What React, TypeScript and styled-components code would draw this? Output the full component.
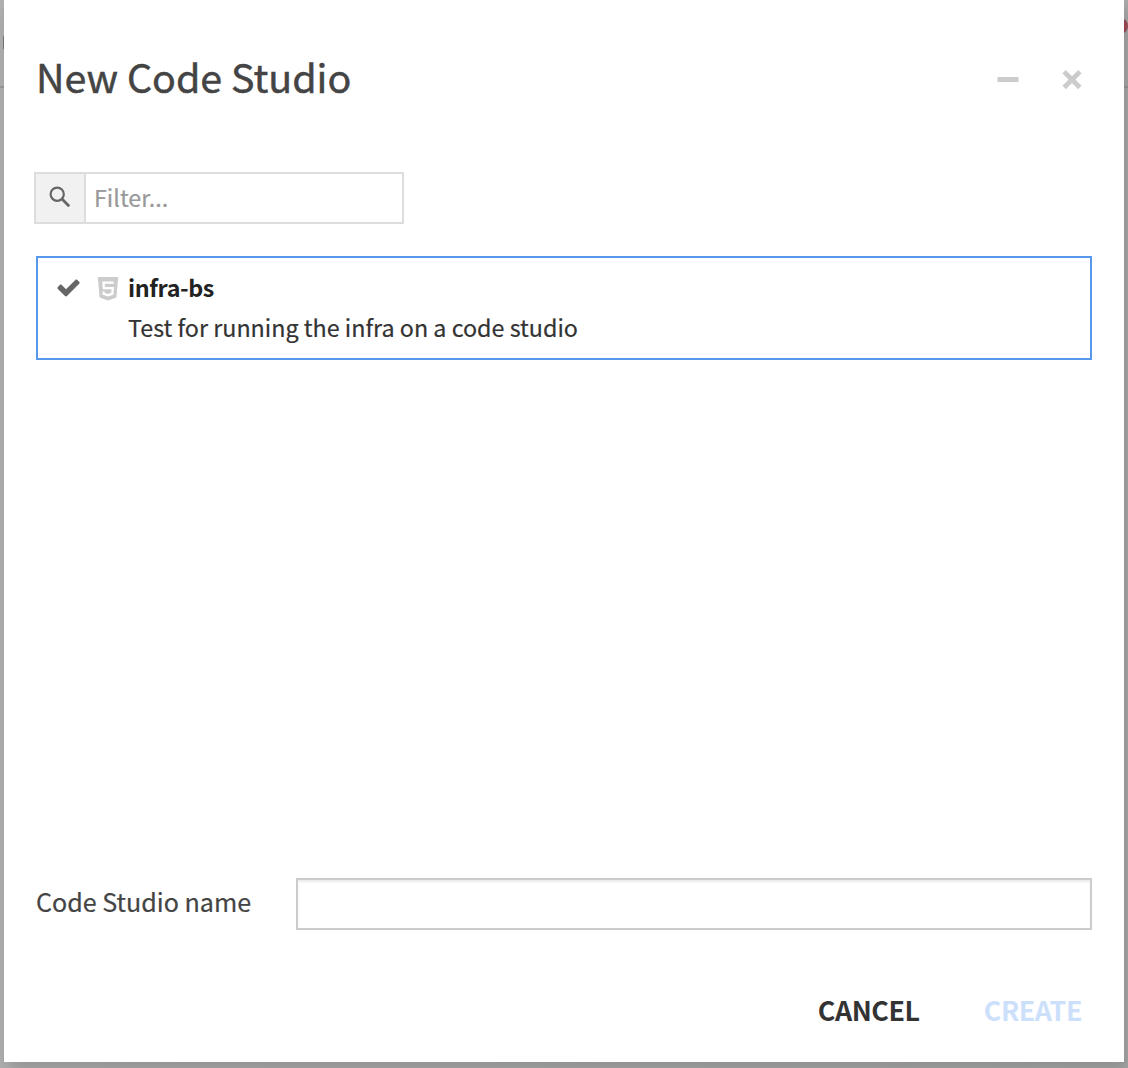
import React from 'react';
import styled, { createGlobalStyle } from 'styled-components';

const GlobalStyle = createGlobalStyle`
  * { box-sizing: border-box; }
  body {
    margin: 0;
    overflow: hidden;
    font-family: "Noto Sans CJK SC", "Noto Sans", sans-serif;
    color: #333;
    -webkit-text-stroke: 0.2px;
  }
  button, input { font: inherit; margin: 0; }
`;

const Backdrop = styled.div`
  position: relative;
  height: 1068px;
  padding: 0 4px 6px;
  background:
    linear-gradient(#99999900 0 86px, #999 86px 88px, #99999900 88px),
    linear-gradient(90deg, #b0b0b0, #a8a9a9);
`;

const Caret = styled.span`
  position: absolute;
  left: 3px;
  top: 36px;
  width: 2px;
  height: 13px;
  background: #777;
`;

const Notification = styled.span`
  position: absolute;
  left: 1112px;
  top: 18px;
  width: 16px;
  height: 16px;
  border-radius: 50%;
  background: #a04c56;
`;

const Dialog = styled.section`
  position: relative;
  display: flex;
  flex-direction: column;
  height: 1062px;
  background: #fff;
  box-shadow: 4px 10px 16px rgba(0, 0, 0, 0.16);
`;

const Header = styled.header`
  display: flex;
  justify-content: space-between;
  align-items: center;
  height: 156px;
  padding: 0 40px 0 32px;
`;

const Title = styled.h1`
  margin: 0 0 4px;
  font-size: 39.4px;
  font-weight: 400;
  line-height: 60px;
  color: #444;
  white-space: nowrap;
  -webkit-text-stroke: 0.5px;
`;

const WindowActions = styled.div`
  display: flex;
  gap: 40px;
  height: 24px;
  margin-top: 4px;
`;

const IconButton = styled.button`
  display: flex;
  width: 24px;
  height: 24px;
  padding: 0;
  border: 0;
  background: none;
`;

const Body = styled.div`
  flex: 1;
  padding: 16px 32px 0;
`;

const FilterBox = styled.div`
  display: flex;
  width: 370px;
  height: 52px;
  margin-left: -2px;
  border: 2px solid #ddd;
`;

const FilterIcon = styled.span`
  display: flex;
  align-items: center;
  justify-content: center;
  width: 50px;
  padding-bottom: 3px;
  border-right: 2px solid #ddd;
  background: #f1f1f1;
`;

const FilterInput = styled.input`
  flex: 1;
  min-width: 0;
  padding: 0 8px 2px;
  border: 0;
  outline: 0;
  font-size: 23.3px;
  &::placeholder { color: #999; opacity: 1; }
`;

const Template = styled.article`
  display: grid;
  grid-template-columns: 40px 30px 1fr;
  grid-template-rows: 40px 40px;
  align-items: center;
  height: 104px;
  margin-top: 32px;
  padding: 9px 20px 11px;
  border: 2px solid #5797ee;

  > svg {
    margin: 3px 0 0 -1px;
  }
`;

const TemplateName = styled.strong`
  font-size: 23.3px;
  line-height: 40px;
  font-weight: 700;
  letter-spacing: -0.36px;
  color: #222;
  -webkit-text-stroke: 0;
`;

const Description = styled.p`
  grid-column: 3;
  margin: 0;
  font-size: 23.3px;
  line-height: 40px;
  color: #333;
  white-space: nowrap;
`;

const NameRow = styled.label`
  display: flex;
  height: 52px;
  padding: 0 32px;
  font-size: 25.1px;
  line-height: 46px;
  color: #444;
`;

const NameLabel = styled.span`
  width: 260px;
  white-space: nowrap;
`;

const NameInput = styled.input`
  flex: 1;
  height: 52px;
  padding: 0 10px;
  border: 2px solid #ccc;
  outline: 0;
  box-shadow: inset 0 2px 2px rgba(0, 0, 0, 0.075);
`;

const Footer = styled.footer`
  display: flex;
  justify-content: flex-end;
  gap: 64px;
  height: 132px;
  padding: 50px 42px 0;
`;

const TextButton = styled.button<{ $primary?: boolean }>`
  height: 60px;
  padding: 0;
  border: 0;
  background: none;
  font-size: 26.8px;
  line-height: 60px;
  font-weight: 700;
  letter-spacing: -0.4px;
  color: ${({ $primary }) => ($primary ? '#cce0fc' : '#333')};
  -webkit-text-stroke: 0;
`;

export default function App() {
  return (
    <>
      <GlobalStyle />
      <Backdrop>
        <Caret />
        <Notification />
        <Dialog role="dialog" aria-label="New Code Studio">
          <Header>
            <Title>New Code Studio</Title>
            <WindowActions>
              <IconButton aria-label="Minimize">
                <svg width="24" height="24" viewBox="0 0 24 24">
                  <rect x="1.5" y="9" width="21" height="5" rx="0.5" fill="#ccc" />
                </svg>
              </IconButton>
              <IconButton aria-label="Close">
                <svg width="24" height="24" viewBox="0 0 24 24">
                  <path d="M4.1 3.7 19.9 19.5M19.9 3.7 4.1 19.5" stroke="#ccc" strokeWidth="4.8" />
                </svg>
              </IconButton>
            </WindowActions>
          </Header>
          <Body>
            <FilterBox>
              <FilterIcon>
                <svg width="22" height="22" viewBox="0 0 22 22" fill="none" stroke="#666">
                  <circle cx="8.2" cy="8.2" r="6.6" strokeWidth="2.2" />
                  <path d="m13 13 7.2 7.2" strokeWidth="2.8" />
                </svg>
              </FilterIcon>
              <FilterInput placeholder="Filter..." />
            </FilterBox>
            <Template>
              <svg width="24" height="20" viewBox="0 0 24 20" fill="#666">
                <path d="M22.2 4.8 10 17c-.6.6-1.4.6-2 0L.9 9.9c-.6-.6-.6-1.4 0-2L2.8 6c.6-.6 1.4-.6 2 0L9 10.2 18.3.9c.6-.6 1.4-.6 2 0l1.900 1.900c.6.6.6 1.400 0 2Z" />
              </svg>
              <svg width="22" height="24" viewBox="0 0 22 24">
                <path d="M0.8 0H21.2L19.4 20.5 11 23.5 2.6 20.5Z" fill="#ccc" />
                <path d="M16.7 5.700H6.500l.4 5.400h8.900l-.5 5.700-4.300 1.400-4.300-1.400-.2-2.300" fill="none" stroke="#fff" strokeWidth="2.3" />
              </svg>
              <TemplateName>infra-bs</TemplateName>
              <Description>Test for running the infra on a code studio</Description>
            </Template>
          </Body>
          <NameRow>
            <NameLabel>Code Studio name</NameLabel>
            <NameInput />
          </NameRow>
          <Footer>
            <TextButton>CANCEL</TextButton>
            <TextButton $primary disabled>CREATE</TextButton>
          </Footer>
        </Dialog>
      </Backdrop>
    </>
  );
}
